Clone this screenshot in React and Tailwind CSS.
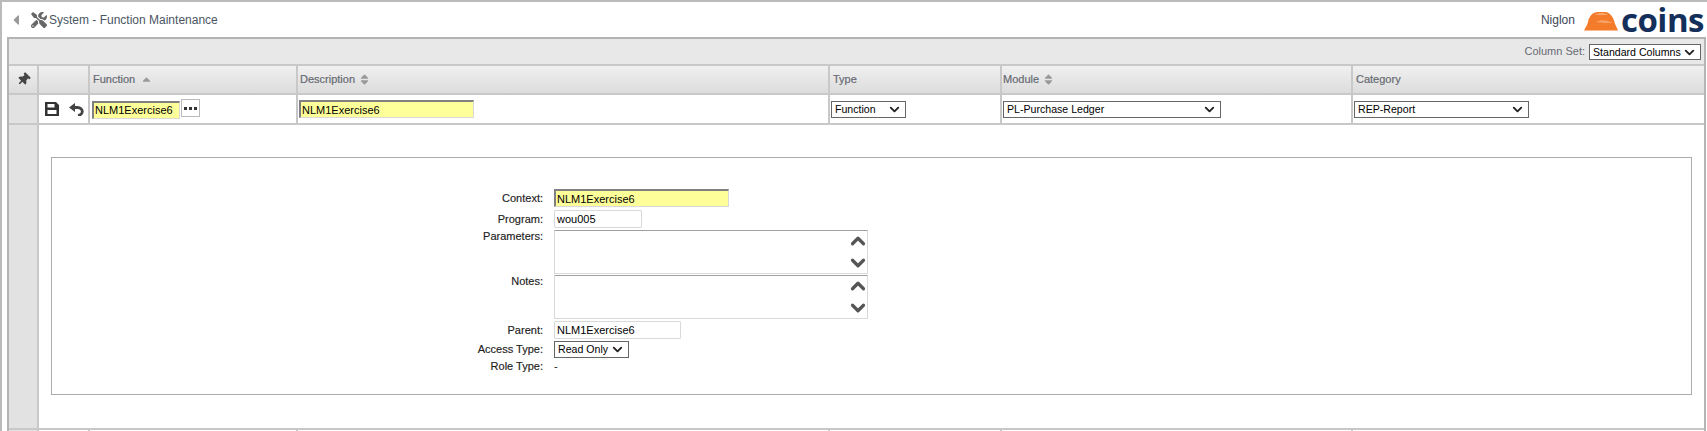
import React from 'react'
import { ChevronUp, ChevronDown } from 'lucide-react'
import { FaTools, FaThumbtack, FaSort, FaSortUp, FaCaretLeft } from 'react-icons/fa'

const cellBorder = 'border-r-2 border-[#c8c8c8]'
const columns = 'grid grid-cols-[30px_51px_208px_532px_172px_351px_1fr]'

const HeaderCell = ({ label, sort, pad = 'pl-[3px]' }) => (
  <div className={`flex items-center gap-[3px] text-[11px] text-[#666a72] [-webkit-text-stroke:0.2px_#666a72] ${pad} ${cellBorder}`}>
    <span>{label}</span>
    {sort === 'up' && <FaSortUp className="mt-[6px] ml-[2px] text-[#999]" size={13} />}
    {sort === 'both' && <FaSort className="text-[#999]" size={13} />}
  </div>
)

const Field = ({ value, width, required, extra = '' }) => (
  <input
    readOnly
    value={value}
    className={`h-[18px] text-[11px] text-black outline-none border border-[#d9d9d9] ${width} ${extra} ${
      required ? 'bg-[#ffff99] border-t-2 border-l-2 border-t-[#808080] border-l-[#808080] px-[1px]' : 'bg-white rounded-[1px] px-[2px]'
    }`}
  />
)

const Select = ({ value, width, height = 'h-[17px]' }) => (
  <div className={`relative ${width} ${height}`}>
    <select
      defaultValue={value}
      className={`block w-full appearance-none border border-[#666] bg-white pb-[2px] pl-[3px] text-[10.6px] text-black outline-none ${height}`}
    >
      <option>{value}</option>
    </select>
    <ChevronDown className="pointer-events-none absolute right-[4px] top-[1px] text-[#222]" size={15} strokeWidth={3} />
  </div>
)

const Memo = ({ extra = '' }) => (
  <div className={`relative h-[44px] w-[314px] rounded-[1px] border border-[#d9d9d9] border-t-[#a0a0a0] ${extra}`}>
    <ChevronUp className="absolute right-[-2px] top-[-1px] text-[#555]" size={22} strokeWidth={3.5} />
    <ChevronDown className="absolute right-[-2px] bottom-[-1px] text-[#555]" size={22} strokeWidth={3.5} />
  </div>
)

const Label = ({ children, top, extra = '' }) => (
  <div className={`text-right text-[11px] text-[#222] [-webkit-text-stroke:0.15px_#222] ${top ? 'self-start leading-[13px]' : 'self-center'} ${extra}`}>{children}</div>
)

export default function App() {
  return (
    <div className="h-[431px] w-[1707px] border-t-2 border-l-2 border-[#bbbbbb] bg-white font-['Liberation_Sans',Arial,sans-serif]">
      <div className="flex h-[35px] items-center pl-[6px] pr-[3px]">
        <FaCaretLeft className="text-[#999]" size={16} />
        <FaTools className="ml-[7px] text-[#666]" size={16} />
        <span className="ml-[2px] text-[12px] text-[#4b5563]">System - Function Maintenance</span>
        <span className="ml-auto text-[12px] text-[#3c4654]">Niglon</span>
        <svg className="ml-[9px] mt-[2px]" width="34" height="20" viewBox="0 0 34 20">
          <path d="M0 19.5 C1 17 3 15 4 11 C5 5 9 1 14 1 H21 C26 1 30 7 31 13 C32 15 33 17 34 19.5 Z" fill="#f47b2a" />
          <path d="M11 4 C15 1.5 21 2 24 4 C20 4 15 4 11 4 Z" fill="#f9ab73" />
          <path d="M12 11 C17 8 23 9 29 12 C23 12 18 12 12 11 Z" fill="#f9a267" />
        </svg>
        <span className="ml-[3px] font-['Open_Sans',sans-serif] text-[33px] leading-[35px] font-bold tracking-[-0.5px] text-[#14305a]">coins</span>
      </div>

      <div className="ml-[5px] mr-[1px] h-[394px] overflow-hidden border-x-2 border-t-2 border-[#b4b4b4]">
        <div className="flex h-[27px] items-center justify-end border-b-2 border-[#c8c8c8] bg-[#e8e8e8] pr-[3px]">
          <span className="text-[11px] text-[#666a72]">Column Set:</span>
          <div className="ml-[4px]">
            <Select value="Standard Columns" width="w-[112px]" height="h-[16px]" />
          </div>
        </div>

        <div className={`${columns} h-[29px] border-b-2 border-[#c8c8c8] bg-gradient-to-b from-[#f0f0f0] to-[#dcdcdc]`}>
          <div className={`flex items-center justify-center ${cellBorder}`}>
            <FaThumbtack className="rotate-45 text-[#444]" size={13} />
          </div>
          <div className={cellBorder} />
          <HeaderCell label="Function" sort="up" />
          <HeaderCell label="Description" sort="both" pad="pl-[2px]" />
          <HeaderCell label="Type" />
          <HeaderCell label="Module" sort="both" pad="pl-[1px]" />
          <div className="flex items-center pl-[3px] text-[11px] text-[#666a72] [-webkit-text-stroke:0.2px_#666a72]">Category</div>
        </div>

        <div className={`${columns} h-[30px] border-b-2 border-[#c8c8c8]`}>
          <div className={`bg-[#e2e2e2] ${cellBorder}`} />
          <div className={`flex items-center gap-[10px] pl-[6px] ${cellBorder}`}>
            <svg width="14" height="14" viewBox="0 0 14 14" className="text-[#333]">
              <path fillRule="evenodd" fill="currentColor" d="M0 0 H11 L14 3 V14 H0 Z M2.5 2 V5.5 H9.5 V2 Z M2.5 8 V12 H11.5 V8 Z" />
            </svg>
            <svg width="15" height="13" viewBox="0 0 15 13" className="text-[#444]">
              <path d="M0 4.5 L6 0 V9 Z" fill="currentColor" />
              <path d="M5 4.5 H8.5 C11.5 4.5 13.3 6.5 13.3 8.5 C13.3 10.5 11.5 12 9 12.5" fill="none" stroke="currentColor" strokeWidth="2.8" />
            </svg>
          </div>
          <div className={`flex items-center pl-[2px] ${cellBorder}`}>
            <Field value="NLM1Exercise6" width="w-[88px]" extra="mt-[1px]" required />
            <button className="ml-[1px] -mt-[2px] flex h-[18px] w-[19px] items-center justify-center gap-[2px] border border-[#bbb] bg-white">
              <span className="size-[3px] bg-[#333]" />
              <span className="size-[3px] bg-[#333]" />
              <span className="size-[3px] bg-[#333]" />
            </button>
          </div>
          <div className={`flex items-center pl-[1px] ${cellBorder}`}>
            <Field value="NLM1Exercise6" width="w-[175px]" required />
          </div>
          <div className={`flex items-center pl-[1px] ${cellBorder}`}>
            <Select value="Function" width="w-[75px]" />
          </div>
          <div className={`flex items-center pl-[1px] ${cellBorder}`}>
            <Select value="PL-Purchase Ledger" width="w-[218px]" />
          </div>
          <div className="flex items-center pl-[1px]">
            <Select value="REP-Report" width="w-[175px]" />
          </div>
        </div>

        <div className="flex h-[303px]">
          <div className={`w-[30px] shrink-0 bg-[#e2e2e2] ${cellBorder}`} />
          <div className="flex-1 px-[12px] pt-[32px]">
            <div className="h-[238px] border border-[#ababab] pt-[31px]">
              <div className="grid grid-cols-[491px_1fr] gap-x-[11px] gap-y-[2px]">
                <Label>Context:</Label>
                <Field value="NLM1Exercise6" width="w-[175px]" required />
                <Label extra="mt-[1px]">Program:</Label>
                <Field value="wou005" width="w-[88px]" extra="mt-[1px]" />
                <Label top>Parameters:</Label>
                <Memo />
                <Label top extra="-mt-[1px]">Notes:</Label>
                <Memo extra="-mt-[1px]" />
                <Label>Parent:</Label>
                <Field value="NLM1Exercise6" width="w-[127px]" />
                <Label>Access Type:</Label>
                <Select value="Read Only" width="w-[75px]" />
                <Label top>Role Type:</Label>
                <div className="text-[11px] leading-[13px] text-[#222]">-</div>
              </div>
            </div>
          </div>
        </div>

        <div className={`${columns} h-[3px] border-t-2 border-[#c8c8c8]`}>
          <div className={`bg-[#e2e2e2] ${cellBorder}`} />
          <div className={cellBorder} />
          <div className={cellBorder} />
          <div className={cellBorder} />
          <div className={cellBorder} />
          <div className={cellBorder} />
          <div />
        </div>
      </div>
    </div>
  )
}
